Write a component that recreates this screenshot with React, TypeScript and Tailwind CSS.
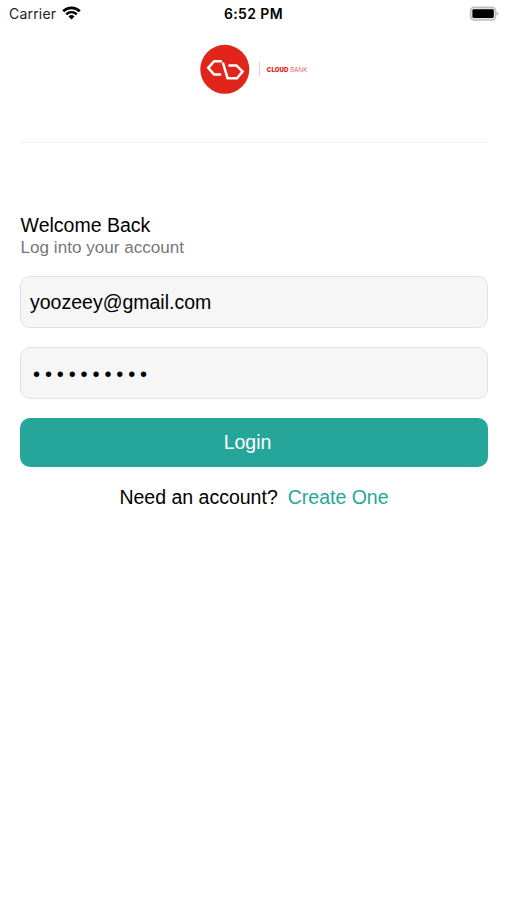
import React from "react";

const StatusBar = () => {
  return (
    <header className="grid grid-cols-3 items-center h-7 pl-[9px] pr-[8px] font-[Inter,sans-serif] text-black">
      <div className="flex items-center gap-[6px]">
        <span className="text-[14px] leading-7 tracking-[0.2px] text-[#222]">Carrier</span>
        <svg className="w-[19px] h-[14px] mb-[2px]" viewBox="0 0 19 14" fill="none">
          <path d="M1.2 5.2a11.8 11.8 0 0 1 16.6 0" stroke="#000" strokeWidth="2.7" />
          <path d="M4.2 8.3a7.6 7.6 0 0 1 10.6 0" stroke="#000" strokeWidth="2.4" />
          <path d="M9.5 13.4 6.5 10.5a4.3 4.3 0 0 1 6 0z" fill="#000" />
        </svg>
      </div>
      <span className="text-center text-[14px] leading-7 font-semibold tracking-[0.4px] -ml-px">
        6:52 PM
      </span>
      <svg className="justify-self-end w-[30px] h-[15px] mb-[2px]" viewBox="0 0 30 15">
        <rect x="1.5" y="1.2" width="25.2" height="12.8" rx="3.8" fill="#e2e2e2" stroke="#bdbdbd" strokeWidth="1.4" />
        <rect x="3.4" y="3.2" width="21.4" height="8.8" rx="1.4" fill="#000" />
        <path d="M27.8 5.4c1.3.5 1.6 1.2 1.6 2.1s-.3 1.6-1.6 2.1z" fill="#bbb" />
      </svg>
    </header>
  );
};

const Logo = () => {
  return (
    <div className="flex items-center justify-center h-[50px] mt-4">
      <svg className="w-[50px] h-[50px]" viewBox="0 0 50 50" fill="none">
        <circle cx="24.8" cy="25.3" r="24.5" fill="#e1251b" />
        <g stroke="#fff" strokeWidth="2.5">
          <path d="M22 17.2H14.2L8.2 23.8 14 30.4H21.2" />
          <path d="M22.8 18.4 27.6 34.2H37L42.6 27.6 36.4 21.4H28.4" />
        </g>
      </svg>
      <span className="w-px h-[15px] ml-[9px] bg-[#f6cfcd]" />
      <span className="mt-[2px] ml-[7px] font-[Inter,sans-serif] text-[6px] leading-none tracking-[0.14px] whitespace-nowrap text-[#e1251b]">
        <b className="font-black">CLOUD</b> <span className="font-light">BANK</span>
      </span>
    </div>
  );
};

const App = () => {
  return (
    <div className="h-screen overflow-hidden bg-white font-['Liberation_Sans',Arial,sans-serif] text-[19.5px] text-black">
      <StatusBar />
      <Logo />

      <main className="px-5 pr-[19px]">
        <hr className="mt-12 border-t-[1.5px] border-[#f0f0f0]" />

        {/* Heading */}
        <h1 className="mt-[71px] pl-[0.6px] leading-[23px]">Welcome Back</h1>
        <p className="pt-px pl-[0.6px] text-[17.1px] leading-5 text-[#777]">Log into your account</p>

        {/* Login form */}
        <div className="mt-[18px] flex flex-col gap-[19px]">
          <div className="flex items-center h-[52px] px-[9px] pt-[2px] rounded-[10px] border border-[#e2e2e2] bg-[#f6f6f6]">
            yoozeey@gmail.com
          </div>
          <div className="flex items-center h-[52px] px-[12px] pt-[2px] rounded-[10px] border border-[#e2e2e2] bg-[#f6f6f6] text-[20px] tracking-[4.9px]">
            ••••••••••
          </div>
          <button className="h-[49px] pr-[13px] rounded-[10px] bg-[#26a69a] text-white">Login</button>
        </div>

        <p className="mt-[19px] flex justify-center gap-[10px] leading-[23px]">
          <span>Need an account?</span>
          <a className="text-[#26a69a]">Create One</a>
        </p>
      </main>
    </div>
  );
};

export default App;
